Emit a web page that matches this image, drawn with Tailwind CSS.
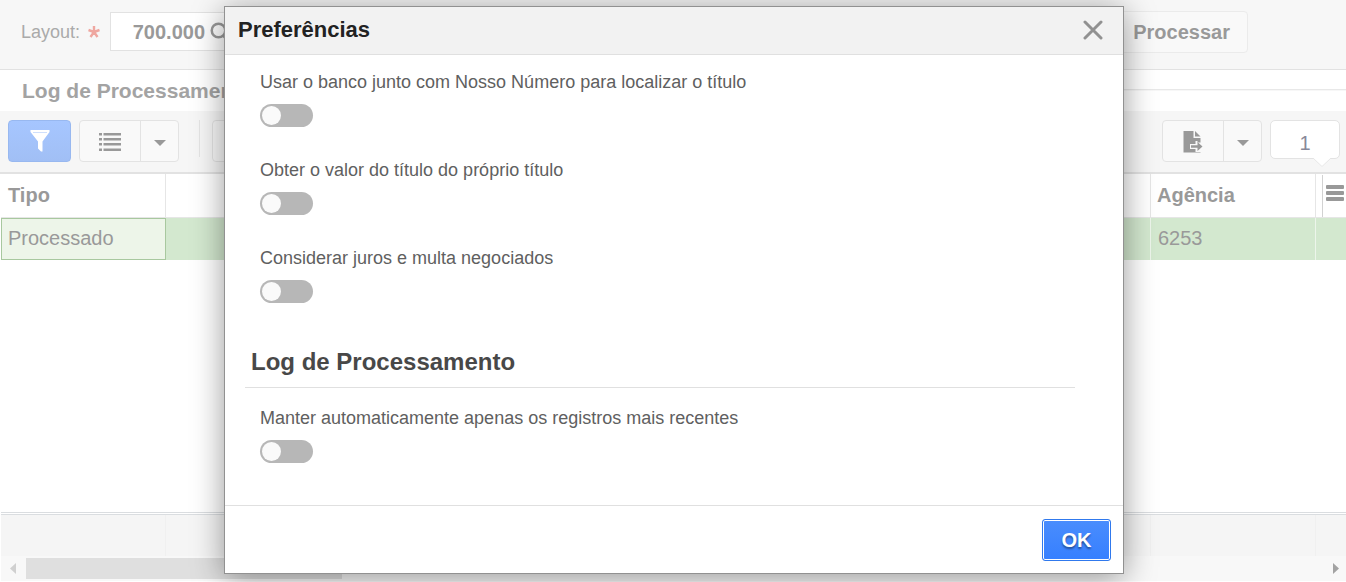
<!DOCTYPE html>
<html lang="pt-BR">
<head>
<meta charset="utf-8">
<meta name="viewport" content="width=device-width, initial-scale=1">
<title>Preferências</title>
<script src="https://cdn.jsdelivr.net/npm/@tailwindcss/browser@4"></script>
</head>
<body class="relative flex min-h-screen flex-col overflow-hidden bg-white font-['Liberation_Sans',Arial,sans-serif] text-xl text-[#999]">

<header class="flex h-[70px] items-start justify-between border-b border-[#e2e2e2] bg-[#f7f7f7]">
  <div class="flex items-center pt-3 pl-[21px]">
    <label for="layout" class="text-lg text-[#aaa]">Layout:</label>
    <svg class="mr-2.5 ml-2 h-3 w-3" viewBox="0 0 12 12" fill="none" stroke="#efa7a0" stroke-width="2.400" aria-hidden="true"><path d="M6 0v6M6 6L.5 4M6 6l5.500-2M6 6l-3.500 5M6 6l3.500 5"/></svg>
    <div class="flex h-[39px] items-center border border-[#e2e2e2] bg-white">
      <input id="layout" value="700.000" class="w-[98px] bg-transparent pr-1 text-right font-bold outline-none">
      <button aria-label="Pesquisar" class="mr-2">
        <svg class="h-5 w-5" viewBox="0 0 20 20" fill="none" stroke="#999" stroke-width="2.500"><circle cx="9.500" cy="8.500" r="6.750"/><path d="M14 13.500l5 5"/></svg>
      </button>
    </div>
  </div>
  <button class="mt-[11px] mr-[98px] h-[42px] rounded-sm border border-[#ebebeb] bg-[#f9f9f9] px-[17px] font-bold text-[#999]">Processar</button>
</header>

<main class="flex flex-1 flex-col">
  <div class="flex h-[41px] items-center pl-[22px]">
    <h2 class="text-[21px] font-bold text-[#a3a3a3]">Log de Processamento</h2>
    <div class="mb-0.5 ml-2 h-0.5 flex-1 border-t border-[#e8e8e8] bg-[#f7f7f7]"></div>
  </div>

  <div class="flex h-[63px] items-start border-b-2 border-[#e2e2e2] bg-[#f6f6f6] px-2 pt-[9px] pr-1.5">
    <button aria-label="Filtrar" class="flex h-[42px] w-[63px] items-center justify-center rounded-sm border border-[#98b8f0] bg-linear-to-b from-[#a6c6ff] to-[#a1bff5]">
      <svg class="h-[22px] w-5" viewBox="0 0 20 22" fill="#fff"><path d="M.5 0h19v2L12.500 11.500V21.500h-1.500l-3-3v-7L.5 2z"/><path d="M3 2.500h14" stroke="#cfdffc"/></svg>
    </button>
    <div class="ml-2 flex h-[42px] w-[100px] rounded-sm border border-[#e3e3e3] bg-[#f9f9f9]">
      <button aria-label="Lista" class="flex w-[60px] items-center justify-center pt-0.5">
        <svg class="h-5 w-[22px]" viewBox="0 0 22 20" fill="#999"><path d="M0 1h3v2.500H0zM4.500 1H22v2.500H4.500zM0 6h3v2.500H0zM4.500 6H22v2.500H4.500zM0 11h3v2.500H0zM4.500 11H22v2.500H4.500zM0 16.500h3V19H0zM4.500 16.500H22V19H4.500z"/></svg>
      </button>
      <button aria-label="Mais opções de lista" class="flex flex-1 items-center justify-center border-l border-[#e3e3e3] pt-1">
        <svg class="h-1.5 w-3" viewBox="0 0 12 6" fill="#999"><path d="M0 0h12L6 6z"/></svg>
      </button>
    </div>
    <div class="mr-3 ml-5 h-[37px] w-px bg-[#e4e4e4]"></div>
    <button aria-label="Ação" class="h-[42px] w-[62px] rounded-sm border border-[#e3e3e3] bg-[#f9f9f9]"></button>
    <div class="ml-auto flex h-[42px] w-[100px] rounded-sm border border-[#e3e3e3] bg-[#f9f9f9]">
      <button aria-label="Exportar" class="flex w-[60px] items-center justify-center pt-0.5">
        <svg class="h-[22px] w-5" viewBox="0 0 20 22" fill="#999"><path d="M.5 0h10v7h7v4.500h-3V10l-2 0v3H7v5h5.500v3h5v.5H.5z"/><path d="M12 0l5.500 5.500H12z"/><path d="M8 14.200h6.500V11l5 4.500-5 4.500v-3.200H8z"/></svg>
      </button>
      <button aria-label="Mais opções de exportação" class="flex flex-1 items-center justify-center border-l border-[#e3e3e3] pt-1">
        <svg class="h-1.5 w-3" viewBox="0 0 12 6" fill="#999"><path d="M0 0h12L6 6z"/></svg>
      </button>
    </div>
    <div class="relative ml-2 flex h-[39px] w-[70px] items-center justify-center rounded-[5px] border border-[#e3e3e3] bg-white pt-1.5 text-[#889]">
      1
      <svg class="absolute top-[36px] right-[7px] h-2.5 w-5" viewBox="0 0 20 10" fill="#fff" aria-hidden="true"><path d="M0 0h20l-10 10z"/><path d="M1 1l9 8.500L19 1" fill="none" stroke="#e6e6e6"/></svg>
    </div>
  </div>

  <table class="ml-px w-[calc(100%-1px)] table-fixed border-separate border-spacing-0 text-left">
    <colgroup><col class="w-[165px]"><col><col class="w-[165px]"><col class="w-[30px]"></colgroup>
    <thead>
      <tr class="h-[44px]">
        <th class="border-r border-b border-[#e6e6e6] pb-0.5 pl-[7px]">Tipo</th>
        <th class="border-r border-b border-[#e6e6e6]"></th>
        <th class="border-r border-b border-[#e6e6e6] pb-0.5 pl-1.5">Agência</th>
        <th class="border-b border-[#e6e6e6] pl-1.5">
          <button aria-label="Colunas" class="flex h-[42px] w-full items-center border-l border-[#d2d2d2] pb-1.5 pl-[3px]">
            <svg class="h-4 w-[18px]" viewBox="0 0 18 16" fill="#999"><rect width="18" height="4" rx="1"/><rect y="6" width="18" height="4" rx="1"/><rect y="12" width="18" height="4" rx="1"/></svg>
          </button>
        </th>
      </tr>
    </thead>
    <tbody>
      <tr class="h-[42px] bg-[#d3e8cf]">
        <td class="border border-[#a8c89f] bg-[#edf5e9] pb-0.5 pl-1.5">Processado</td>
        <td class="border-r border-[#edf5eb]"></td>
        <td class="border-r border-[#edf5eb] pb-0.5 pl-[7px]">6253</td>
        <td></td>
      </tr>
    </tbody>
  </table>

  <div class="mt-auto ml-px border-t border-[#dadde0] pt-px">
    <div class="grid h-[42px] grid-cols-[165px_1fr_165px_30px] border-t border-[#dadde0] bg-[#f5f5f5]">
      <div class="border-r border-[#f0f0f0]"></div>
      <div class="border-r border-[#f0f0f0]"></div>
      <div class="border-r border-[#f0f0f0]"></div>
    </div>
    <div class="mb-px flex h-[25px] items-center bg-[#f8f8f8]">
      <svg class="mr-2.5 ml-[9px] h-[11px] w-1.5" viewBox="0 0 6 11" fill="#d0d0d0" aria-hidden="true"><path d="M6 0v11L0 5.500z"/></svg>
      <div class="h-[21px] w-[316px] bg-[#dfdfdf]"></div>
      <svg class="mr-[7px] ml-auto h-[11px] w-1.5" viewBox="0 0 6 11" fill="#a3a3a3" aria-hidden="true"><path d="M0 0v11l6-5.500z"/></svg>
    </div>
  </div>
</main>

<div class="absolute inset-0 flex items-start justify-center pt-1.5 pl-0.5">
  <section role="dialog" aria-labelledby="titulo" class="flex w-[900px] flex-col border border-[#919191] bg-white text-[#606060] shadow-[0_4px_30px_rgba(0,0,0,0.4)]">
    <div class="flex h-12 items-center justify-between border-b border-[#e0e0e0] bg-[#f2f2f2] pr-5 pl-[13px]">
      <h1 id="titulo" class="text-[22px] font-bold text-[#222]">Preferências</h1>
      <button aria-label="Fechar" class="pb-0.5">
        <svg class="h-5 w-5" viewBox="0 0 20 20" fill="none" stroke="#919191" stroke-width="3" stroke-linecap="round"><path d="M2 2l16 16M18 2L2 18"/></svg>
      </button>
    </div>
    <div class="pr-12 pl-5 text-lg">
      <div class="flex flex-col gap-[29px] pt-[13px] pl-[15px]">
        <label class="flex flex-col items-start gap-2">
          <span>Usar o banco junto com Nosso Número para localizar o título</span>
          <input type="checkbox" role="switch" class="h-[23px] w-[53px] appearance-none rounded-full bg-[#b7b7b7] p-0.5 before:block before:h-[19px] before:w-[19px] before:rounded-full before:bg-[#fafafa]">
        </label>
        <label class="flex flex-col items-start gap-2">
          <span>Obter o valor do título do próprio título</span>
          <input type="checkbox" role="switch" class="h-[23px] w-[53px] appearance-none rounded-full bg-[#b7b7b7] p-0.5 before:block before:h-[19px] before:w-[19px] before:rounded-full before:bg-[#fafafa]">
        </label>
        <label class="flex flex-col items-start gap-2">
          <span>Considerar juros e multa negociados</span>
          <input type="checkbox" role="switch" class="h-[23px] w-[53px] appearance-none rounded-full bg-[#b7b7b7] p-0.5 before:block before:h-[19px] before:w-[19px] before:rounded-full before:bg-[#fafafa]">
        </label>
      </div>
      <h2 class="mt-[41px] border-b border-[#e0e0e0] pb-[7px] pl-1.5 text-2xl leading-[36px] font-bold text-[#484848]">Log de Processamento</h2>
      <label class="flex flex-col items-start gap-2 pt-4 pb-[42px] pl-[15px]">
        <span>Manter automaticamente apenas os registros mais recentes</span>
        <input type="checkbox" role="switch" class="h-[23px] w-[53px] appearance-none rounded-full bg-[#b7b7b7] p-0.5 before:block before:h-[19px] before:w-[19px] before:rounded-full before:bg-[#fafafa]">
      </label>
    </div>
    <div class="flex h-[68px] items-center justify-end border-t border-[#e0e0e0] pr-3">
      <button class="h-[42px] w-[69px] rounded-[3px] border border-[#3079ed] bg-linear-to-b from-[#4a8dfd] to-[#357fff] text-xl font-bold text-white inset-ring inset-ring-white [text-shadow:0_2px_2px_rgba(0,0,0,0.4)]">OK</button>
    </div>
  </section>
</div>
</body>
</html>
